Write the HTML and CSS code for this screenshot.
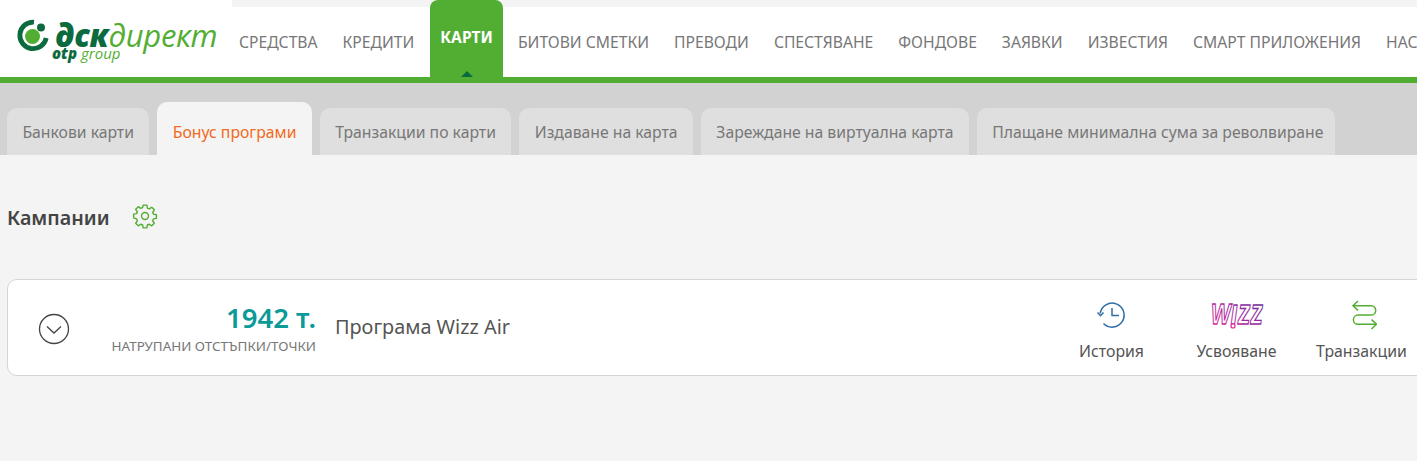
FILE: index.html
```html
<!DOCTYPE html>
<html lang="bg">
<head>
  <meta charset="UTF-8">
  <meta name="viewport" content="width=device-width, initial-scale=1.0">
  <title>Бонус програми</title>
  <link rel="stylesheet" href="styles.css">
</head>
<body>

  <!-- Main navigation -->
  <header class="top">
    <a class="logo" href="#">
      <svg class="logo-mark" width="34" height="34" viewBox="0 0 34 34">
        <path d="M18 3.100A13.300 13.300 0 1 0 30.200 19" fill="none" stroke="#0b6b3f" stroke-width="4.800"/>
        <circle cx="16.500" cy="17.500" r="7.500" fill="#52ae32"/>
        <circle cx="25" cy="8.500" r="4" fill="#0b6b3f"/>
      </svg>
      <span class="logo-text">
        <span class="logo-main"><b>дск</b>директ</span>
        <span class="logo-sub"><b>otp</b> group</span>
      </span>
    </a>
    <nav class="nav">
      <a href="#">СРЕДСТВА</a>
      <a href="#">КРЕДИТИ</a>
      <a href="#" class="active">КАРТИ</a>
      <a href="#">БИТОВИ СМЕТКИ</a>
      <a href="#">ПРЕВОДИ</a>
      <a href="#">СПЕСТЯВАНЕ</a>
      <a href="#">ФОНДОВЕ</a>
      <a href="#">ЗАЯВКИ</a>
      <a href="#">ИЗВЕСТИЯ</a>
      <a href="#">СМАРТ ПРИЛОЖЕНИЯ</a>
      <a href="#">НАСТРОЙКИ</a>
    </nav>
  </header>

  <!-- Sub tabs -->
  <div class="tabs">
    <a href="#">Банкови карти</a>
    <a href="#" class="active">Бонус програми</a>
    <a href="#">Транзакции по карти</a>
    <a href="#">Издаване на карта</a>
    <a href="#">Зареждане на виртуална карта</a>
    <a href="#">Плащане минимална сума за револвиране</a>
  </div>

  <main class="content">
    <div class="heading">
      <h1>Кампании</h1>
      <svg class="gear" width="26" height="26" viewBox="0 0 24 24" fill="none" stroke="#52ae32" stroke-width="1.300" stroke-linejoin="round">
        <circle cx="12" cy="12" r="3.200"/>
        <path d="M10.300 2h3.400l.5 2.700 1.700.7 2.300-1.500 2.400 2.400-1.500 2.300.7 1.700 2.700.5v3.400l-2.700.5-.7 1.700 1.500 2.300-2.400 2.400-2.300-1.500-1.700.7-.5 2.700h-3.400l-.5-2.700-1.700-.7-2.300 1.500-2.400-2.400 1.500-2.300-.7-1.700L1.500 13.700v-3.400l2.700-.5.7-1.700-1.500-2.300 2.400-2.400 2.300 1.500 1.700-.7z"/>
      </svg>
    </div>

    <section class="card">
      <svg class="toggle" width="32" height="32" viewBox="0 0 32 32" fill="none" stroke="#444" stroke-width="1.300">
        <circle cx="16" cy="16" r="14.500"/>
        <path d="M9 13.500l7 6.500 7-6.500"/>
      </svg>
      <div class="points">
        <strong>1942 т.</strong>
        <span>НАТРУПАНИ ОТСТЪПКИ/ТОЧКИ</span>
      </div>
      <div class="program">Програма Wizz Air</div>
      <div class="actions">
        <a href="#" class="action">
          <svg width="30" height="30" viewBox="0 0 30 30" fill="none" stroke="#2f6da4" stroke-width="1.500">
            <path d="M3.200 13.500A12 12 0 1 1 6.500 23.500"/>
            <path d="M.5 12.500l3 3.200 3-3.200"/>
            <path d="M15 8v7.500h7"/>
          </svg>
          История
        </a>
        <a href="#" class="action">
          <svg class="wizz" width="56" height="30" viewBox="0 0 56 30">
            <defs>
              <linearGradient id="wizz" x1="0" y1="1" x2="1" y2="0">
                <stop offset="0" stop-color="#e0259a"/>
                <stop offset="1" stop-color="#5b2d9e"/>
              </linearGradient>
            </defs>
            <text x="2" y="24" textLength="52" lengthAdjust="spacingAndGlyphs" class="wizz-text">W<tspan class="wizz-small">ızz</tspan></text>
            <circle cx="24" cy="26" r="2" fill="#fff" stroke="#e0259a" stroke-width="1.200"/>
          </svg>
          Усвояване
        </a>
        <a href="#" class="action">
          <svg width="30" height="30" viewBox="0 0 30 30" fill="none" stroke="#52ae32" stroke-width="1.500">
            <path d="M6 5.700H24a4.700 4.700 0 0 1 0 9.400H11a4.600 4.600 0 0 0 0 9.200H29.500"/>
            <path d="M11 1L6 5.700l5 4.700"/>
            <path d="M24.500 19.600l5 4.700-5 4.700"/>
          </svg>
          Транзакции
        </a>
      </div>
    </section>
  </main>

</body>
</html>
```

FILE: styles.css
```css
html, body { margin: 0; padding: 0; height: 100%; overflow: hidden; }
body { font-family: "Noto Sans", Arial, sans-serif; background: #f4f4f4; color: #444; width: 1417px; }
a { text-decoration: none; color: inherit; }

.top { display: flex; height: 77px; background: linear-gradient(#f4f4f4 7px, #fff 7px); border-bottom: 6px solid #52ae32; overflow: hidden; }
.logo { flex: 0 0 232px; box-sizing: border-box; background: #fff; display: flex; padding: 19px 0 0 16px; gap: 5px; }
.logo-mark { flex: none; }
.logo-text { display: flex; flex-direction: column; font-family: "Open Sans", sans-serif; font-style: italic; }
.logo-main { font-size: 31px; line-height: 32px; color: #52ae32; letter-spacing: -0.3px; white-space: nowrap; }
.logo-main b { color: #0b6b3f; font-weight: 800; }
.logo-sub { font-size: 15px; line-height: 15px; margin: -5px 0 0 -3px; color: #52ae32; }
.logo-sub b { color: #0b6b3f; font-weight: 800; }

.nav { display: flex; gap: 25px; padding-left: 7px; white-space: nowrap; flex: none; }
.nav a { font-size: 15.670px; color: #777; padding-top: 31px; }
.nav a.active { position: relative; background: #52ae32; color: #fff; font-weight: 700; font-size: 15.600px; padding: 26px 10px 0; margin: 0 -10px 0 -9px; border-radius: 8px 8px 0 0; }
.nav a.active::after { content: ""; position: absolute; left: 50%; bottom: 0; margin-left: -6px; border: 6px solid transparent; border-top: 0; border-bottom-color: #0b6b3f; }

.tabs { display: flex; align-items: flex-end; gap: 8px; height: 72px; background: #d2d2d2; padding-left: 7px; white-space: nowrap; }
.tabs a { height: 47px; box-sizing: border-box; padding: 14px 15.400px 0; font-size: 15.750px; line-height: 20px; background: #dfdfdf; color: #777; border-radius: 10px 10px 0 0; }
.tabs a:last-child { padding-right: 12px; }
.tabs a.active { height: 53px; padding-top: 20px; background: #f4f4f4; color: #f26a21; }

.content { padding: 0 0 0 7px; }
.heading { display: flex; align-items: center; gap: 22px; height: 26px; margin-top: 49px; }
.heading h1 { margin: 0; font-size: 19.700px; font-weight: 600; color: #444; }
.gear { margin-bottom: 2px; }

.card { display: flex; align-items: center; box-sizing: border-box; width: 1420px; height: 97px; margin-top: 49px; background: #fff; border: 1px solid #d5d5d5; border-radius: 10px; }
.toggle { flex: none; margin: 3px 0 0 30px; }
.points { flex: 0 0 246px; box-sizing: border-box; display: flex; flex-direction: column; align-items: flex-end; margin: 2px 19px 0 0; }
.points strong { font-size: 27.500px; line-height: 30px; font-weight: 600; color: #0a9a98; }
.points span { font-size: 13.450px; line-height: 17px; margin-top: 5px; color: #777; white-space: nowrap; }
.program { flex: 1; font-size: 19.850px; color: #555; margin-bottom: 2px; }
.actions { display: flex; padding-right: 2px; }
.action { display: flex; flex-direction: column; align-items: center; width: 125px; font-size: 15.850px; line-height: 20px; color: #555; gap: 11px; margin-top: 6px; }
.wizz { overflow: visible; }
.wizz-text { font-family: "Liberation Sans", sans-serif; font-size: 29px; font-weight: 700; font-style: italic; fill: #fff; stroke: url(#wizz); stroke-width: 1.300; }
.wizz-small { font-size: 35px; }
```
